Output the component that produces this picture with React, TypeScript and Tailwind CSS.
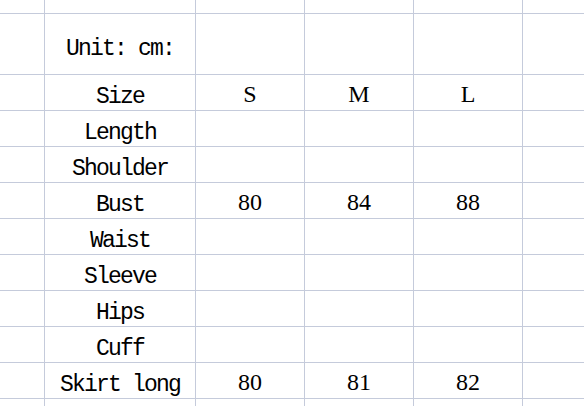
const rows: [string, string, string, string][] = [
  ["Size", "S", "M", "L"],
  ["Length", "", "", ""],
  ["Shoulder", "", "", ""],
  ["Bust", "80", "84", "88"],
  ["Waist", "", "", ""],
  ["Sleeve", "", "", ""],
  ["Hips", "", "", ""],
  ["Cuff", "", "", ""],
  ["Skirt long", "80", "81", "82"],
];

const mono = "font-['Liberation_Mono',monospace] text-[23px] tracking-[-1.8px] pb-[1px]";
const serif = "font-['Liberation_Serif',serif] text-[24px] pb-[4px]";

const Cell = ({ children, className = "" }: { children?: React.ReactNode; className?: string }) => (
  <div className={`bg-white flex items-end justify-center leading-none text-black ${className}`}>
    {children}
  </div>
);

export default function App() {
  return (
    <div className="w-[584px] h-[406px] overflow-hidden bg-white">
      <div className="grid grid-cols-[44px_150px_108px_108px_108px_62px] grid-rows-[13px_60px_repeat(9,35px)_8px] gap-px bg-[#c5cbdb] w-[584px]">
        {/* top strip */}
        {Array.from({ length: 6 }).map((_, i) => (
          <Cell key={`t${i}`} />
        ))}

        {/* unit row */}
        <Cell />
        <Cell className="font-['Liberation_Mono',monospace] text-[23px] tracking-[-1.8px] pb-[13px]">Unit: cm:</Cell>
        <Cell />
        <Cell />
        <Cell />
        <Cell />

        {rows.map(([label, s, m, l]) => (
          <div key={label} className="contents">
            <Cell />
            <Cell className={mono}>{label}</Cell>
            <Cell className={serif}>{s}</Cell>
            <Cell className={serif}>{m}</Cell>
            <Cell className={serif}>{l}</Cell>
            <Cell />
          </div>
        ))}

        {Array.from({ length: 6 }).map((_, i) => (
          <Cell key={`b${i}`} />
        ))}
      </div>
    </div>
  );
}
